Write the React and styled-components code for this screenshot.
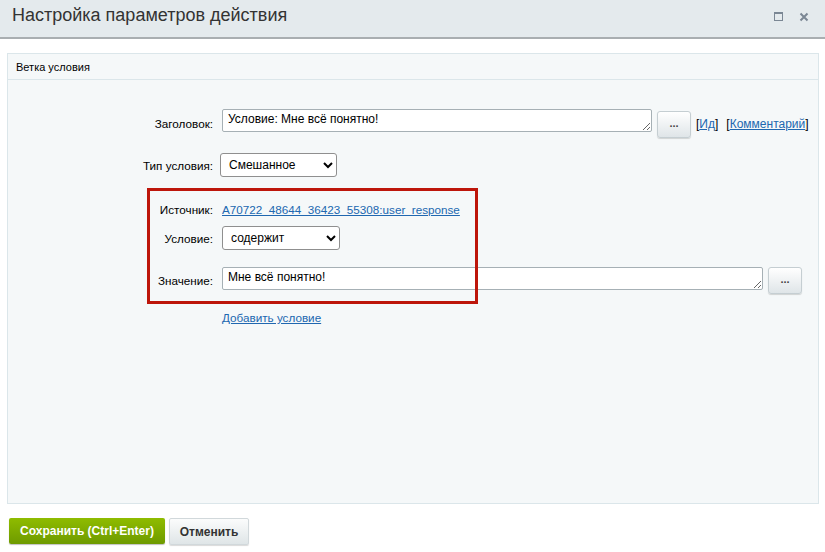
import React from 'react'
import styled, { createGlobalStyle } from 'styled-components'

const Global = createGlobalStyle`
    html, body {
        margin: 0;
        padding: 0;
        background: #fff;
        font-family: "Liberation Sans", Arial, sans-serif;
        color: #000;
    }
`

export default function App() {
    return (
        <Dialog>
            <Global />
            <Head>
                <Title>Настройка параметров действия</Title>
                <HeadIcons>
                    <svg width="10" height="10" viewBox="0 0 10 10">
                        <rect x="0.5" y="0.5" width="8" height="8" fill="none" stroke="#7b8794" strokeWidth="1" />
                        <rect x="0.5" y="0.5" width="8" height="1.5" fill="#7b8794" />
                    </svg>
                    <svg width="10" height="10" viewBox="0 0 10 10">
                        <path d="M1.5 1.5 L8.5 8.5 M8.5 1.5 L1.5 8.5" stroke="#7b8794" strokeWidth="2" />
                    </svg>
                </HeadIcons>
            </Head>

            <Panel>
                <PanelHead>Ветка условия</PanelHead>
                <PanelBody>
                    <Row $mt={0}>
                        <Label>Заголовок:</Label>
                        <Field>
                            <Area $w={430} defaultValue="Условие: Мне всё понятно!" />
                            <DotsBtn>...</DotsBtn>
                            <Links>
                                <span>[<a>Ид</a>]</span>
                                <span>[<a>Комментарий</a>]</span>
                            </Links>
                        </Field>
                    </Row>
                    <Row $mt={15}>
                        <Label>Тип условия:</Label>
                        <Field $shift={-2}>
                            <Select $w={117} defaultValue="mix">
                                <option value="mix">Смешанное</option>
                            </Select>
                        </Field>
                    </Row>
                    <Row $mt={26}>
                        <Label>Источник:</Label>
                        <Field>
                            <Link>A70722_48644_36423_55308:user_response</Link>
                        </Field>
                    </Row>
                    <Row $mt={10}>
                        <Label>Условие:</Label>
                        <Field>
                            <Select $w={118} defaultValue="c">
                                <option value="c">содержит</option>
                            </Select>
                        </Field>
                    </Row>
                    <Row $mt={17}>
                        <Label>Значение:</Label>
                        <Field>
                            <Area $w={541} defaultValue="Мне всё понятно!" />
                            <DotsBtn $mt={0}>...</DotsBtn>
                        </Field>
                    </Row>
                    <Row $mt={17}>
                        <span />
                        <Field>
                            <Link>Добавить условие</Link>
                        </Field>
                    </Row>
                    <Mark />
                </PanelBody>
            </Panel>

            <Footer>
                <SaveBtn>Сохранить (Ctrl+Enter)</SaveBtn>
                <CancelBtn>Отменить</CancelBtn>
            </Footer>
        </Dialog>
    )
}

const Dialog = styled.div`
    width: 825px;
    height: 552px;
    display: flex;
    flex-direction: column;
    background: #fff;
`

const Head = styled.div`
    height: 37px;
    flex: none;
    display: flex;
    align-items: center;
    justify-content: space-between;
    padding: 0 16px 0 12px;
    background: #e4eaed;
    border-bottom: 2px solid #a9aeb1;
`

const Title = styled.div`
    font-size: 18px;
    color: #333;
    margin-top: -6px;
`

const HeadIcons = styled.div`
    display: flex;
    gap: 15px;
    margin-top: -4px;
`

const Panel = styled.div`
    margin: 14px 6px 0 7px;
    height: 449px;
    display: flex;
    flex-direction: column;
    border: 1px solid #dbe6ea;
    background: #f5f8f9;
`

const PanelHead = styled.div`
    height: 25px;
    flex: none;
    display: flex;
    align-items: center;
    padding-left: 8px;
    font-size: 11px;
    color: #000;
    border-bottom: 1px solid #dbe6ea;
`

const PanelBody = styled.div`
    position: relative;
    flex: 1;
    padding-top: 29px;
    display: flex;
    flex-direction: column;
`

const Row = styled.div`
    display: grid;
    grid-template-columns: 205px 1fr;
    column-gap: 9px;
    align-items: center;
    margin-top: ${p => p.$mt}px;
`

const Label = styled.div`
    text-align: right;
    font-size: 11.7px;
    color: #000;
`

const Field = styled.div`
    display: flex;
    align-items: flex-start;
    gap: 5px;
    margin-left: ${p => p.$shift || 0}px;
    font-size: 11.7px;
`

const Area = styled.textarea`
    box-sizing: border-box;
    width: ${p => p.$w}px;
    height: 23px;
    margin: 0;
    padding: 2px 5px;
    font-family: "Liberation Sans", Arial, sans-serif;
    font-size: 12px;
    color: #000;
    border: 1px solid #a6b0b5;
    border-radius: 2px;
    background: #fff;
    resize: both;
    overflow: hidden;
`

const DotsBtn = styled.button`
    box-sizing: border-box;
    width: 34px;
    height: 27px;
    margin-top: ${p => p.$mt ?? 2}px;
    padding: 0 0 4px;
    border: 1px solid #c5ced2;
    border-radius: 3px;
    background: linear-gradient(#ffffff, #dfe5e8);
    box-shadow: 0 1px 1px rgba(0, 0, 0, 0.15);
    font-family: "Liberation Sans", Arial, sans-serif;
    font-size: 11px;
    font-weight: bold;
    color: #444;
`

const Links = styled.div`
    display: flex;
    gap: 8px;
    margin-top: 8px;
    font-size: 12px;
    color: #000;

    a {
        color: #2067b0;
        text-decoration: underline;
    }
`

const Link = styled.a`
    color: #2067b0;
    text-decoration: underline;
    font-size: 11.7px;
    cursor: pointer;
`

const Select = styled.select`
    box-sizing: border-box;
    width: ${p => p.$w}px;
    height: 24px;
    padding: 0 4px;
    font-family: "Liberation Sans", Arial, sans-serif;
    font-size: 12px;
    color: #000;
    background: #fff;
    border: 1px solid #8f8f8f;
    border-radius: 3px;
`

const Mark = styled.div`
    position: absolute;
    left: 139px;
    top: 108px;
    width: 331px;
    height: 116px;
    box-sizing: border-box;
    border: 3px solid #bd160b;
    pointer-events: none;
`

const Footer = styled.div`
    display: flex;
    gap: 4px;
    padding: 14px 0 0 9px;
`

const SaveBtn = styled.button`
    box-sizing: border-box;
    width: 156px;
    height: 26px;
    border: none;
    border-radius: 2px;
    background: linear-gradient(#8fbc00, #6e9a00);
    box-shadow: 0 1px 1px rgba(0, 0, 0, 0.25);
    color: #fff;
    font-family: "Liberation Sans", Arial, sans-serif;
    font-size: 12px;
    font-weight: bold;
`

const CancelBtn = styled.button`
    box-sizing: border-box;
    width: 80px;
    height: 27px;
    border: 1px solid #d1d8db;
    border-radius: 2px;
    background: linear-gradient(#fbfcfc, #dfe5e7);
    box-shadow: 0 1px 1px rgba(0, 0, 0, 0.15);
    color: #333;
    font-family: "Liberation Sans", Arial, sans-serif;
    font-size: 12px;
    font-weight: bold;
`
